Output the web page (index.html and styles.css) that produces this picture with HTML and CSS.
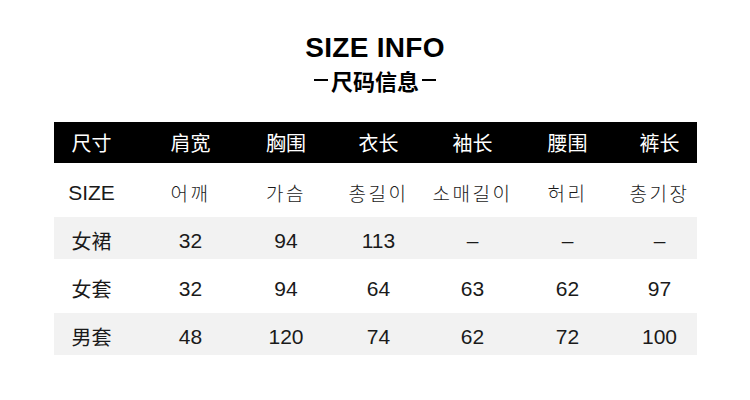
FILE: index.html
```html
<!DOCTYPE html>
<html lang="zh">
<head>
<meta charset="utf-8">
<title>SIZE INFO</title>
<link rel="stylesheet" href="styles.css">
</head>
<body>
<div class="page">
  <header class="title">
    <h1 class="title-en">SIZE INFO</h1>
    <p class="title-cn"><span class="dash"></span>尺码信息<span class="dash"></span></p>
  </header>
  <div class="table">
    <div class="row head">
      <div class="cell first">尺寸</div><div class="cell">肩宽</div><div class="cell">胸围</div><div class="cell">衣长</div><div class="cell">袖长</div><div class="cell">腰围</div><div class="cell last">裤长</div>
    </div>
    <div class="row tall">
      <div class="cell first num">SIZE</div><div class="cell ko">어깨</div><div class="cell ko">가슴</div><div class="cell ko">총길이</div><div class="cell ko">소매길이</div><div class="cell ko">허리</div><div class="cell ko last">총기장</div>
    </div>
    <div class="row gray">
      <div class="cell first">女裙</div><div class="cell num">32</div><div class="cell num">94</div><div class="cell num">113</div><div class="cell num">–</div><div class="cell num">–</div><div class="cell num last">–</div>
    </div>
    <div class="row tall">
      <div class="cell first">女套</div><div class="cell num">32</div><div class="cell num">94</div><div class="cell num">64</div><div class="cell num">63</div><div class="cell num">62</div><div class="cell num last">97</div>
    </div>
    <div class="row gray">
      <div class="cell first">男套</div><div class="cell num">48</div><div class="cell num">120</div><div class="cell num">74</div><div class="cell num">62</div><div class="cell num">72</div><div class="cell num last">100</div>
    </div>
  </div>
</div>
</body>
</html>
```

FILE: styles.css
```css
html, body {
  margin: 0;
  padding: 0;
  background: #ffffff;
}
body {
  width: 750px;
  height: 400px;
  overflow: hidden;
  font-family: "Noto Sans CJK SC", "Noto Sans", sans-serif;
  color: #1a1a1a;
}
.page {
  display: flex;
  flex-direction: column;
  align-items: center;
  padding-top: 33px;
}
.title {
  display: flex;
  flex-direction: column;
  align-items: center;
}
.title-en {
  margin: 0;
  font-family: "Liberation Sans", Arial, sans-serif;
  font-weight: 700;
  font-size: 28px;
  line-height: 30px;
  color: #000;
  letter-spacing: 0.3px;
}
.title-cn {
  margin: 4px 0 0;
  display: flex;
  align-items: center;
  gap: 3px;
  font-family: "Noto Sans CJK SC", sans-serif;
  font-weight: 700;
  font-size: 22px;
  line-height: 26px;
  color: #000;
}
.dash {
  display: block;
  width: 14px;
  height: 2px;
  background: #000;
}
.table {
  margin-top: 29px;
  width: 643px;
  display: flex;
  flex-direction: column;
}
.row {
  display: grid;
  grid-template-columns: 88px 98px 93px 92px 96px 94px 82px;
  align-items: center;
  height: 42px;
  font-size: 20px;
  box-sizing: border-box;
  padding-top: 5px;
}
.row.head {
  height: 41px;
  padding-top: 1px;
  background: #000;
  color: #fff;
}
.row.tall {
  height: 54px;
  padding-top: 5px;
}
.row.gray {
  background: #f2f2f2;
}
.cell {
  text-align: center;
  line-height: 24px;
}
.cell.first {
  padding-right: 12px;
}
.cell.last {
  padding-left: 8px;
}
.num {
  font-family: "Liberation Sans", Arial, sans-serif;
  font-size: 21px;
}
.ko {
  font-family: "Noto Sans CJK KR", sans-serif;
  font-weight: 300;
  font-size: 19px;
  letter-spacing: 2.5px;
}
```
